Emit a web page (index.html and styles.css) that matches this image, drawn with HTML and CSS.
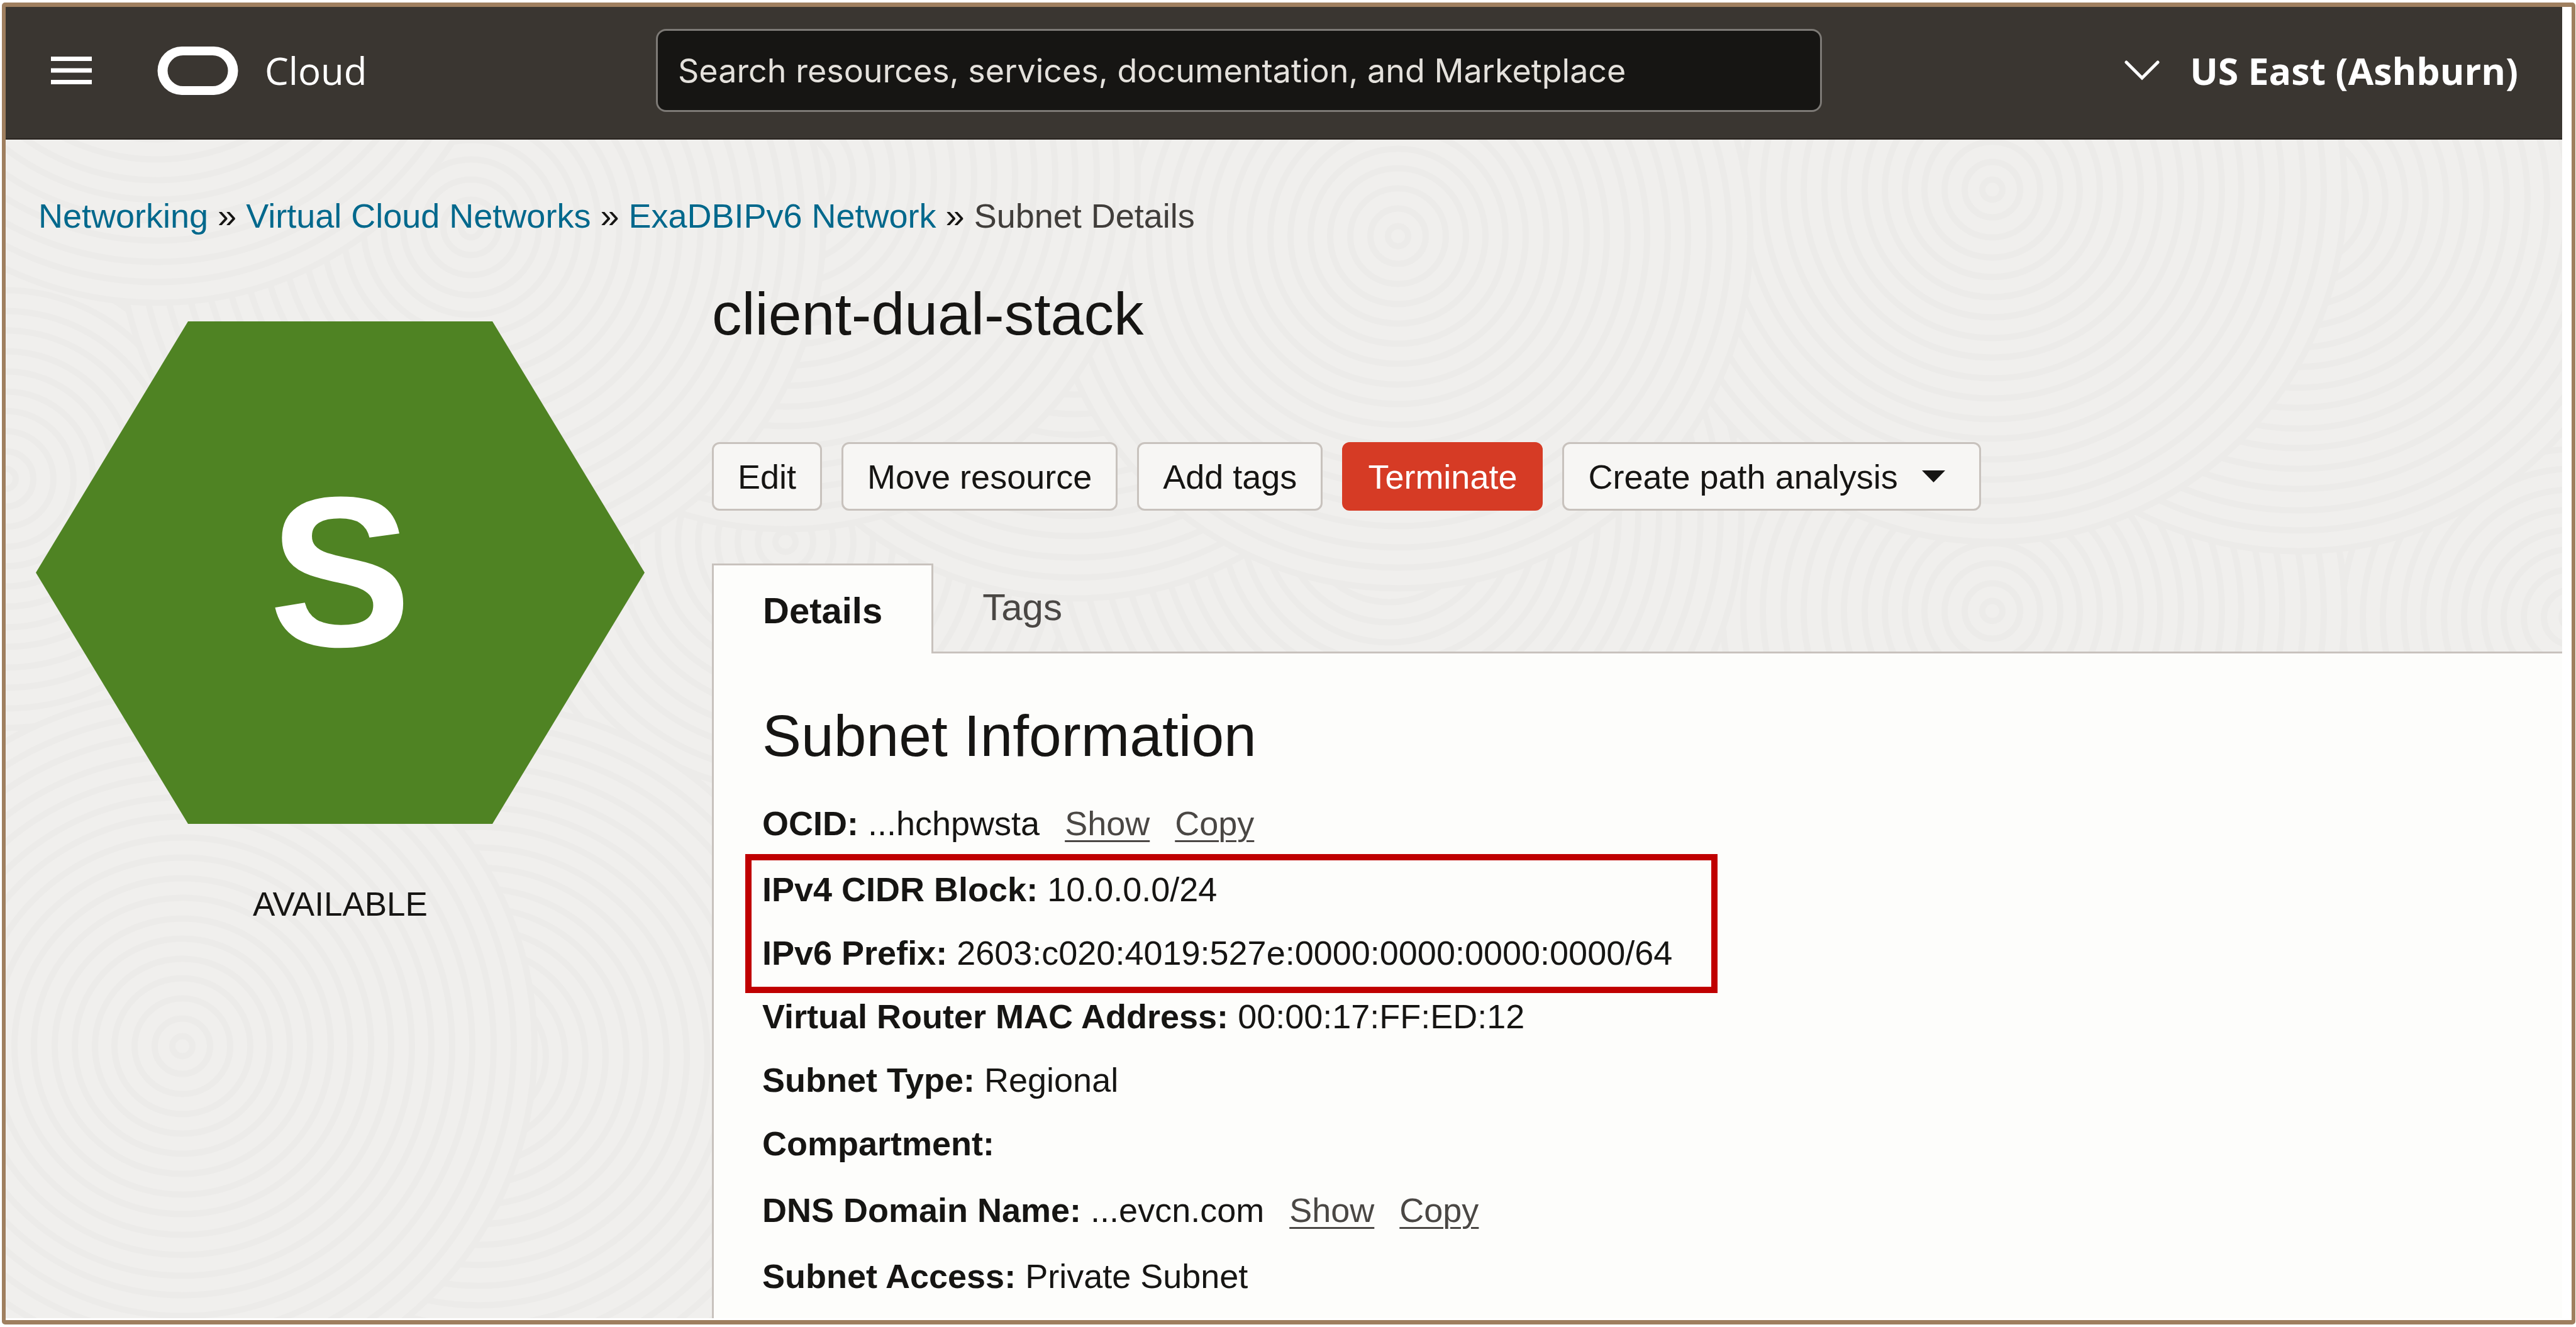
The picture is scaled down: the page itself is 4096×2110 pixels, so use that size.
FILE: index.html
```html
<!DOCTYPE html>
<html lang="en">
<head>
<meta charset="utf-8">
<meta name="viewport" content="width=device-width, initial-scale=1">
<title>client-dual-stack - Subnet Details</title>
<link rel="stylesheet" href="styles.css">
</head>
<body>
<div class="frame">
  <header class="topbar">
    <div class="brand">
      <button class="menu-button" type="button" aria-label="Open navigation menu">
        <svg class="menu-icon" viewBox="0 0 65 44" aria-hidden="true"><path d="M0 3.500h65M0 22h65M0 40.500h65" fill="none" stroke="#fff" stroke-width="7"/></svg>
      </button>
      <a class="logo" href="#">
        <svg class="logo-icon" viewBox="0 0 129 77" aria-hidden="true"><path d="M39 0h51a38.500 38.500 0 0 1 0 77H39a38.500 38.500 0 0 1 0-77zM41 14a24.500 24.500 0 0 0 0 49h47a24.500 24.500 0 0 0 0-49z" fill="#fff"/></svg>
        <span>Cloud</span>
      </a>
    </div>
    <input class="search" type="search" aria-label="Search" placeholder="Search resources, services, documentation, and Marketplace">
    <button class="region" type="button">
      <svg class="region-icon" viewBox="0 0 56 32" aria-hidden="true"><path d="M3 3l25 25L53 3" fill="none" stroke="#fff" stroke-width="5" stroke-linecap="round"/></svg>
      US East (Ashburn)
    </button>
  </header>

  <div class="workspace">
    <svg class="texture" viewBox="0 0 4065 1875" preserveAspectRatio="xMidYMid slice" aria-hidden="true">
      <defs>
        <g id="rings" stroke="#ecebe9" stroke-width="10">
          <circle r="560" fill="#f0efed"/>
          <g fill="none"><circle r="527"/><circle r="495"/><circle r="461"/><circle r="429"/><circle r="396"/><circle r="365"/><circle r="332"/><circle r="300"/><circle r="267"/><circle r="236"/><circle r="203"/><circle r="171"/><circle r="139"/><circle r="108"/><circle r="76"/><circle r="44"/><circle r="16"/></g>
        </g>
      </defs>
      <use href="#rings" x="800" y="820"/>
      <use href="#rings" x="0" y="540"/>
      <use href="#rings" x="4080" y="760"/>
      <use href="#rings" x="3159" y="750"/>
      <use href="#rings" x="1240" y="640"/>
      <use href="#rings" x="2200" y="597"/>
      <use href="#rings" x="1700" y="170"/>
      <use href="#rings" x="2700" y="-300"/>
      <use href="#rings" x="3645" y="95"/>
      <use href="#rings" x="3159" y="80"/>
      <use href="#rings" x="2214" y="154"/>
      <use href="#rings" x="1240" y="60"/>
      <use href="#rings" x="740" y="140"/>
      <use href="#rings" x="240" y="-300"/>
      <use href="#rings" x="1240" y="1900"/>
      <use href="#rings" x="751" y="1458"/>
      <use href="#rings" x="281" y="1442"/>
    </svg>

    <nav class="breadcrumb" aria-label="Breadcrumb">
      <a href="#">Networking</a> » <a href="#">Virtual Cloud Networks</a> » <a href="#">ExaDBIPv6 Network</a> » <span class="current">Subnet Details</span>
    </nav>

    <main class="resource">
      <aside class="status">
        <div class="hexagon">S</div>
        <p class="state">AVAILABLE</p>
      </aside>

      <div class="detail">
        <h1 class="title">client-dual-stack</h1>
        <div class="actions">
          <button class="action" type="button">Edit</button>
          <button class="action" type="button">Move resource</button>
          <button class="action" type="button">Add tags</button>
          <button class="action danger" type="button">Terminate</button>
          <button class="action dropdown" type="button">Create path analysis
            <svg class="caret" viewBox="0 0 37 19" aria-hidden="true"><path d="M0 0h37L18.500 19z" fill="#161513"/></svg>
          </button>
        </div>

        <div class="tabs" role="tablist">
          <button class="tab active" type="button" role="tab" aria-selected="true">Details</button>
          <button class="tab" type="button" role="tab" aria-selected="false">Tags</button>
        </div>

        <section class="panel">
          <h2 class="section-title">Subnet Information</h2>
          <dl class="fields">
            <div class="field with-links"><dt>OCID:</dt> <dd>...hchpwsta</dd><a href="#">Show</a><a href="#">Copy</a></div>
            <div class="highlight">
              <div class="field"><dt>IPv4 CIDR Block:</dt> <dd>10.0.0.0/24</dd></div>
              <div class="field"><dt>IPv6 Prefix:</dt> <dd>2603:c020:4019:527e:0000:0000:0000:0000/64</dd></div>
            </div>
            <div class="field"><dt>Virtual Router MAC Address:</dt> <dd>00:00:17:FF:ED:12</dd></div>
            <div class="field"><dt>Subnet Type:</dt> <dd>Regional</dd></div>
            <div class="field"><dt>Compartment:</dt> <dd></dd></div>
            <div class="field with-links"><dt>DNS Domain Name:</dt> <dd>...evcn.com</dd><a href="#">Show</a><a href="#">Copy</a></div>
            <div class="field"><dt>Subnet Access:</dt> <dd>Private Subnet</dd></div>
          </dl>
        </section>
      </div>
    </main>
  </div>
</div>
</body>
</html>
```
FILE: styles.css
```css
* {
  box-sizing: border-box;
}

body {
  margin: 0;
  padding: 4px 1px 4px 3px;
  background: #fff;
  color: #161513;
  font: 54px/64px "Liberation Sans", Arial, sans-serif;
}

button,
input {
  font: inherit;
  color: inherit;
}

button {
  padding: 0;
  border: 0;
  background: none;
  white-space: nowrap;
}

svg {
  display: block;
  flex: none;
}

.frame {
  display: flex;
  flex-direction: column;
  min-height: calc(100vh - 8px);
  padding: 0 15px 3px 0;
  border: 6px solid #9f7f5f;
  border-width: 7px 6px;
  border-radius: 5px;
}

/* Top bar */
.topbar {
  display: flex;
  align-items: center;
  padding: 35px 70px 42px 72px;
  border-bottom: 2px solid #2a2520;
  background: #3a3631;
  color: #fff;
  font-family: "Open Sans", sans-serif;
}

.brand {
  display: flex;
  align-items: center;
  gap: 104px;
  width: 962px;
}

.menu-icon {
  width: 65px;
  height: 44px;
}

.logo {
  display: flex;
  align-items: center;
  gap: 42px;
  color: #fff;
  font-size: 60px;
  font-weight: 500;
  text-decoration: none;
}

.logo-icon {
  width: 129px;
  height: 77px;
}

.search {
  flex: 0 1 1854px;
  min-width: 0;
  height: 132px;
  padding: 0 32px;
  border: 3px solid #7d7a76;
  border-radius: 16px;
  background: #161513;
  font-family: Inter, sans-serif;
  font-size: 52px;
  appearance: none;
}

.search::placeholder {
  color: #e4e1dc;
  opacity: 1;
}

.region {
  display: flex;
  align-items: center;
  gap: 48px;
  margin-left: auto;
  font-size: 59px;
  font-weight: 700;
}

.region-icon {
  width: 56px;
  height: 32px;
}

/* Page */
.workspace {
  position: relative;
  z-index: 0;
  display: flex;
  flex: 1;
  flex-direction: column;
  padding: 89px 0 0 48px;
  background: #f0efed;
}

.texture {
  position: absolute;
  inset: 0;
  z-index: -1;
  width: 100%;
  height: 100%;
}

.breadcrumb {
  padding-left: 4px;
}

.breadcrumb a {
  color: #00688c;
  text-decoration: none;
}

.current {
  color: #403d3a;
}

.resource {
  display: grid;
  flex: 1;
  grid-template-columns: 968px minmax(0, 1fr);
  gap: 107px;
  padding-top: 68px;
}

.hexagon {
  display: flex;
  align-items: center;
  justify-content: center;
  height: 799px;
  margin-top: 68px;
  padding-bottom: 4px;
  background: #4f8323;
  color: #fff;
  clip-path: polygon(25% 0, 75% 0, 100% 50%, 75% 100%, 25% 100%, 0 50%);
  font-size: 340px;
  font-weight: 700;
}

.state {
  margin: 96px 0 0;
  font-size: 53px;
  text-align: center;
}

.detail {
  display: flex;
  flex-direction: column;
}

.title {
  margin: 0;
  font-size: 95px;
  font-weight: 400;
  line-height: 112px;
}

.actions {
  display: flex;
  flex-wrap: wrap;
  gap: 31px;
  margin-top: 148px;
}

.action {
  height: 109px;
  padding: 0 38px;
  border: 3px solid #c8c2bd;
  border-radius: 12px;
  background: #f7f6f4;
}

.danger {
  border-color: #d63b25;
  background: #d63b25;
  color: #fff;
}

.dropdown {
  display: flex;
  align-items: center;
  gap: 38px;
  padding-right: 54px;
}

.caret {
  width: 37px;
  height: 19px;
}

.tabs {
  display: flex;
  margin-top: 84px;
  border-bottom: 3px solid #c8c2bd;
}

.tab {
  height: 140px;
  padding: 0 78px;
  color: #4a4744;
  font-size: 60px;
}

.tab.active {
  height: 143px;
  margin-bottom: -3px;
  padding-top: 4px;
  border: 3px solid #c8c2bd;
  border-bottom: 0;
  background: #fdfdfb;
  color: #161513;
  font-size: 58px;
  font-weight: 700;
}

.panel {
  flex: 1;
  padding: 75px 77px 0;
  border-left: 3px solid #c8c2bd;
  background: #fdfdfb;
}

.section-title {
  margin: 0;
  font-size: 93px;
  font-weight: 400;
  line-height: 112px;
}

.fields {
  margin: 28px 0 0;
}

.field {
  line-height: 101px;
}

.with-links {
  line-height: 110px;
}

.field dt,
.field dd {
  display: inline;
  margin: 0;
}

.field dt {
  font-weight: 700;
}

.field a {
  margin-left: 40px;
  color: #4a4744;
  text-decoration-thickness: 3px;
  text-underline-offset: 8px;
}

.highlight {
  position: relative;
  width: fit-content;
}

.highlight::after {
  content: "";
  position: absolute;
  inset: -6px -72px -13px -27px;
  border: 10px solid #c00000;
}
```
